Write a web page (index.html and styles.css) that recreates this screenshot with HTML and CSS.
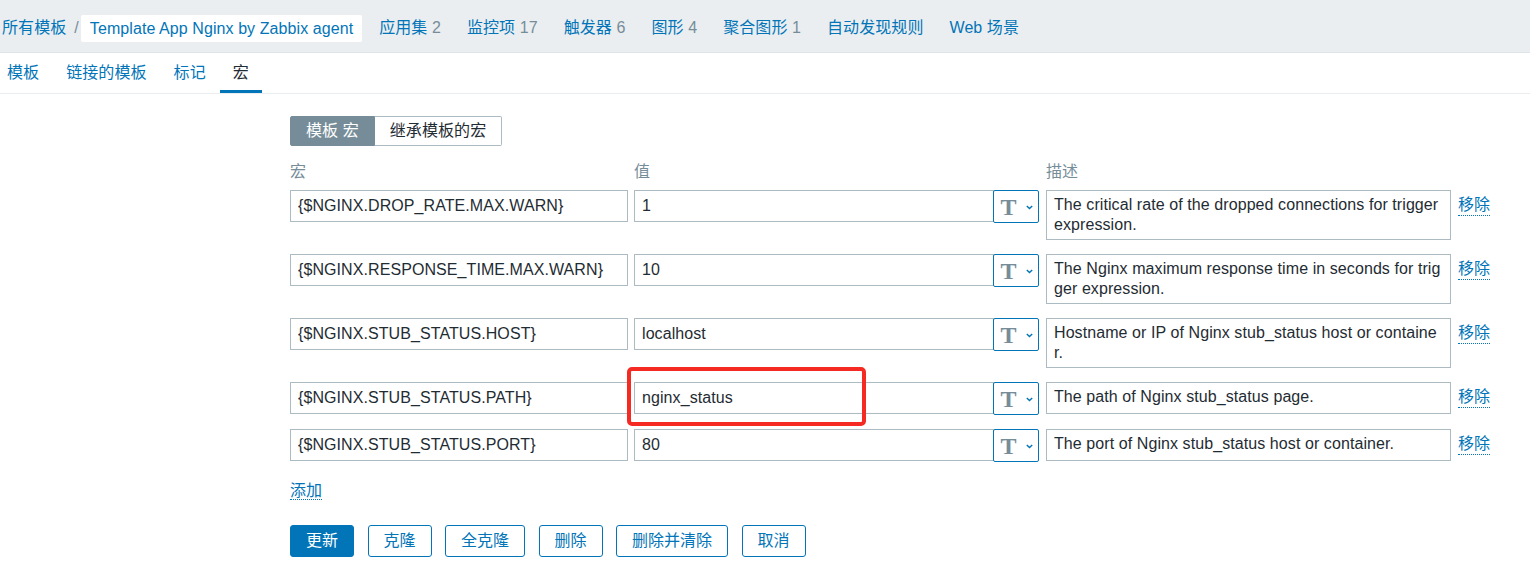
FILE: index.html
```html
<!DOCTYPE html>
<html lang="zh">
<head>
<meta charset="utf-8">
<title>Template App Nginx by Zabbix agent - 宏</title>
<link rel="stylesheet" href="styles.css">
</head>
<body>
<header class="topbar">
  <nav class="breadcrumb">
    <a class="crumb" href="#">所有模板</a>
    <span class="sep">/</span>
    <span class="crumb-current">Template App Nginx by Zabbix agent</span>
  </nav>
  <ul class="subnav">
    <li><a href="#">应用集</a> <span class="count">2</span></li>
    <li><a href="#">监控项</a> <span class="count">17</span></li>
    <li><a href="#">触发器</a> <span class="count">6</span></li>
    <li><a href="#">图形</a> <span class="count">4</span></li>
    <li><a href="#">聚合图形</a> <span class="count">1</span></li>
    <li><a href="#">自动发现规则</a></li>
    <li><a href="#">Web 场景</a></li>
  </ul>
</header>

<ul class="tabs">
  <li class="tab"><a href="#">模板</a></li>
  <li class="tab"><a href="#">链接的模板</a></li>
  <li class="tab"><a href="#">标记</a></li>
  <li class="tab active"><span>宏</span></li>
</ul>

<main class="content">
  <div class="toggle">
    <span class="toggle-btn on">模板 宏</span>
    <span class="toggle-btn">继承模板的宏</span>
  </div>

  <div class="macro-head">
    <div class="col-macro">宏</div>
    <div class="col-value">值</div>
    <div class="col-desc">描述</div>
  </div>

  <div class="macro-rows">
    <div class="macro-row">
      <input class="field col-macro" type="text" value="{$NGINX.DROP_RATE.MAX.WARN}">
      <div class="value-group col-value">
        <input class="field value-input" type="text" value="1">
        <button class="type-btn" type="button"><span class="type-t">T</span><svg class="chev" width="7" height="5" viewBox="0 0 7 5"><polyline points="0.8,0.9 3.5,3.6 6.2,0.9" fill="none" stroke="#0275b8" stroke-width="1.4"/></svg></button>
      </div>
      <div class="desc col-desc">The critical rate of the dropped connections for trigger expression.</div>
      <a class="link-dotted remove" href="#">移除</a>
    </div>

    <div class="macro-row">
      <input class="field col-macro" type="text" value="{$NGINX.RESPONSE_TIME.MAX.WARN}">
      <div class="value-group col-value">
        <input class="field value-input" type="text" value="10">
        <button class="type-btn" type="button"><span class="type-t">T</span><svg class="chev" width="7" height="5" viewBox="0 0 7 5"><polyline points="0.8,0.9 3.5,3.6 6.2,0.9" fill="none" stroke="#0275b8" stroke-width="1.4"/></svg></button>
      </div>
      <div class="desc col-desc">The Nginx maximum response time in seconds for trigger expression.</div>
      <a class="link-dotted remove" href="#">移除</a>
    </div>

    <div class="macro-row">
      <input class="field col-macro" type="text" value="{$NGINX.STUB_STATUS.HOST}">
      <div class="value-group col-value">
        <input class="field value-input" type="text" value="localhost">
        <button class="type-btn" type="button"><span class="type-t">T</span><svg class="chev" width="7" height="5" viewBox="0 0 7 5"><polyline points="0.8,0.9 3.5,3.6 6.2,0.9" fill="none" stroke="#0275b8" stroke-width="1.4"/></svg></button>
      </div>
      <div class="desc col-desc">Hostname or IP of Nginx stub_status host or container.</div>
      <a class="link-dotted remove" href="#">移除</a>
    </div>

    <div class="macro-row">
      <input class="field col-macro" type="text" value="{$NGINX.STUB_STATUS.PATH}">
      <div class="value-group col-value">
        <input class="field value-input" type="text" value="nginx_status">
        <button class="type-btn" type="button"><span class="type-t">T</span><svg class="chev" width="7" height="5" viewBox="0 0 7 5"><polyline points="0.8,0.9 3.5,3.6 6.2,0.9" fill="none" stroke="#0275b8" stroke-width="1.4"/></svg></button>
        <span class="highlight"></span>
      </div>
      <div class="desc col-desc">The path of Nginx stub_status page.</div>
      <a class="link-dotted remove" href="#">移除</a>
    </div>

    <div class="macro-row">
      <input class="field col-macro" type="text" value="{$NGINX.STUB_STATUS.PORT}">
      <div class="value-group col-value">
        <input class="field value-input" type="text" value="80">
        <button class="type-btn" type="button"><span class="type-t">T</span><svg class="chev" width="7" height="5" viewBox="0 0 7 5"><polyline points="0.8,0.9 3.5,3.6 6.2,0.9" fill="none" stroke="#0275b8" stroke-width="1.4"/></svg></button>
      </div>
      <div class="desc col-desc">The port of Nginx stub_status host or container.</div>
      <a class="link-dotted remove" href="#">移除</a>
    </div>
  </div>

  <div class="add-line"><a class="link-dotted" href="#">添加</a></div>

  <div class="actions">
    <button class="btn primary" type="button">更新</button>
    <button class="btn" type="button">克隆</button>
    <button class="btn" type="button">全克隆</button>
    <button class="btn" type="button">删除</button>
    <button class="btn" type="button">删除并清除</button>
    <button class="btn" type="button">取消</button>
  </div>
</main>
</body>
</html>
```

FILE: styles.css
```css
* {
  box-sizing: border-box;
}

html, body {
  margin: 0;
  padding: 0;
  background: #ffffff;
}

body {
  font-family: "Liberation Sans", Arial, "Noto Sans CJK SC", sans-serif;
  font-size: 16px;
  line-height: 20px;
  letter-spacing: 0.08px;
  color: #1f2c33;
  width: 1530px;
  overflow: hidden;
}

a {
  color: #0275b8;
  text-decoration: none;
}

ul {
  list-style: none;
  margin: 0;
  padding: 0;
}

/* ---------- top bar ---------- */
.topbar {
  display: flex;
  align-items: center;
  height: 53px;
  padding: 4px 0 0 2px;
  background: #ebeef0;
  border-bottom: 1px solid #dfe4e7;
}

.breadcrumb {
  display: flex;
  align-items: center;
}

.sep {
  color: #768d99;
  margin: 0 2px 0 8px;
}

.crumb-current {
  display: inline-block;
  height: 27px;
  line-height: 27px;
  padding: 0 9px;
  background: #ffffff;
  border-radius: 2px;
  color: #0275b8;
}

.subnav {
  display: flex;
  gap: 26px;
  margin-left: 17px;
}

.count {
  color: #768d99;
}

/* ---------- tabs ---------- */
.tabs {
  display: flex;
  gap: 1px;
  margin-left: -6px;
  border-bottom: 1px solid #ebeef0;
}

.tab {
  height: 40px;
  line-height: 40px;
  padding: 0 13px;
}

.tab.active {
  color: #1f2c33;
  box-shadow: inset 0 -3px 0 #0275b8;
}

/* ---------- content ---------- */
.content {
  padding: 22px 0 0 290px;
}

.toggle {
  display: flex;
}

.toggle-btn {
  height: 30px;
  line-height: 28px;
  padding: 0 15px;
  border: 1px solid #acbbc2;
  background: #ffffff;
  color: #1f2c33;
}

.toggle-btn:first-child {
  border-radius: 2px 0 0 2px;
}

.toggle-btn:last-child {
  border-radius: 0 2px 2px 0;
  border-left: 0;
}

.toggle-btn.on {
  background: #768d99;
  border-color: #768d99;
  color: #ffffff;
}

.macro-head {
  display: flex;
  margin-top: 16px;
  margin-bottom: 8px;
  color: #768d99;
}

.macro-head .col-value,
.macro-row .col-value {
  margin-left: 6px;
}

.macro-head .col-desc,
.macro-row .col-desc {
  margin-left: 7px;
}

.col-macro {
  width: 338px;
  flex: none;
}

.col-value {
  width: 405px;
  flex: none;
}

.col-desc {
  width: 405px;
  flex: none;
}

.macro-rows {
  display: flex;
  flex-direction: column;
  gap: 14px;
}

.macro-row {
  display: flex;
  align-items: flex-start;
}

.field {
  height: 32px;
  margin: 0;
  padding: 0 7px;
  border: 1px solid #acbbc2;
  border-radius: 0;
  background: #ffffff;
  font-family: inherit;
  font-size: 16px;
  letter-spacing: 0.08px;
  color: #1f2c33;
  outline: none;
}

.value-group {
  position: relative;
  display: flex;
}

.value-input {
  flex: 1;
  min-width: 0;
}

.type-btn {
  display: flex;
  align-items: center;
  justify-content: center;
  gap: 9px;
  width: 46px;
  height: 33px;
  margin: 0 0 0 -1px;
  padding: 0 0 0 1px;
  border: 1px solid #0275b8;
  border-radius: 2px;
  background: #ffffff;
  cursor: pointer;
}

.type-t {
  font-family: "Liberation Serif", "Times New Roman", serif;
  font-weight: bold;
  font-size: 24px;
  line-height: 20px;
  color: #768d99;
}

.chev {
  display: block;
  margin-top: 1px;
}

.highlight {
  position: absolute;
  left: -7px;
  top: -15px;
  width: 239px;
  height: 59px;
  border: 4px solid #f52a22;
  border-radius: 5px;
  pointer-events: none;
}

.desc {
  min-height: 32px;
  padding: 4px 7px;
  border: 1px solid #acbbc2;
  line-height: 20px;
  color: #1f2c33;
  word-break: break-all;
  background: #ffffff;
}

.link-dotted {
  color: #0275b8;
  border-bottom: 1px dotted #0275b8;
  line-height: 20px;
}

.remove {
  margin: 5px 0 0 7px;
}

.add-line {
  margin-top: 19px;
  height: 21px;
}

.actions {
  display: flex;
  gap: 13.5px;
  margin-top: 23px;
}

.btn {
  height: 32px;
  margin: 0;
  padding: 0 15px;
  border: 1px solid #0275b8;
  border-radius: 3px;
  background: #ffffff;
  color: #0275b8;
  font-family: inherit;
  font-size: 16px;
  line-height: 30px;
  cursor: pointer;
}

.btn.primary {
  background: #0275b8;
  color: #ffffff;
}
```
